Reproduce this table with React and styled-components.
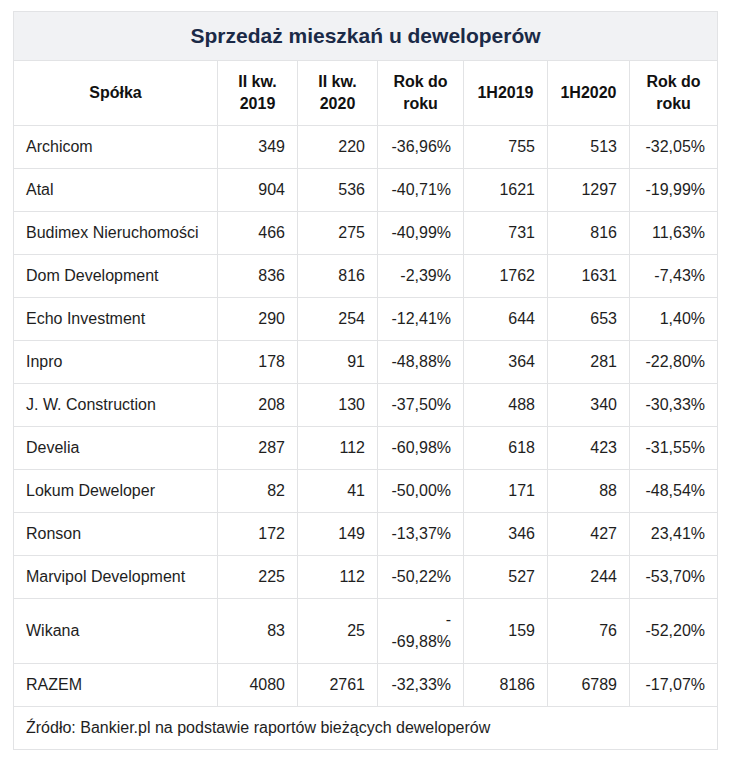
import React from 'react';
import styled, { createGlobalStyle } from 'styled-components';

const GlobalStyle = createGlobalStyle`
  body {
    margin: 0;
    background: #ffffff;
    font-family: "Liberation Sans", Arial, sans-serif;
  }
`;

const columns = [204, 80, 80, 86, 84, 82, 88];

const headers = [
  ['Spółka'],
  ['II kw.', '2019'],
  ['II kw.', '2020'],
  ['Rok do', 'roku'],
  ['1H2019'],
  ['1H2020'],
  ['Rok do', 'roku'],
];

const rows = [
  ['Archicom', '349', '220', '-36,96%', '755', '513', '-32,05%'],
  ['Atal', '904', '536', '-40,71%', '1621', '1297', '-19,99%'],
  ['Budimex Nieruchomości', '466', '275', '-40,99%', '731', '816', '11,63%'],
  ['Dom Development', '836', '816', '-2,39%', '1762', '1631', '-7,43%'],
  ['Echo Investment', '290', '254', '-12,41%', '644', '653', '1,40%'],
  ['Inpro', '178', '91', '-48,88%', '364', '281', '-22,80%'],
  ['J. W. Construction', '208', '130', '-37,50%', '488', '340', '-30,33%'],
  ['Develia', '287', '112', '-60,98%', '618', '423', '-31,55%'],
  ['Lokum Deweloper', '82', '41', '-50,00%', '171', '88', '-48,54%'],
  ['Ronson', '172', '149', '-13,37%', '346', '427', '23,41%'],
  ['Marvipol Development', '225', '112', '-50,22%', '527', '244', '-53,70%'],
  ['Wikana', '83', '25', ['-', '-69,88%'], '159', '76', '-52,20%'],
  ['RAZEM', '4080', '2761', '-32,33%', '8186', '6789', '-17,07%'],
];

const Page = styled.div`
  padding: 11px 13px;
`;

const Table = styled.table`
  width: 704px;
  table-layout: fixed;
  border-collapse: collapse;
  font-size: 16px;
  line-height: 22px;
  color: #1e1e1e;
`;

const TitleCell = styled.th`
  background: #f1f2f4;
  border: 1px solid #e2e3e5;
  padding: 12px;
  font-size: 21px;
  line-height: 24px;
  font-weight: 700;
  color: #1b2a47;
  text-align: center;
`;

const HeadCell = styled.th`
  border: 1px solid #e2e3e5;
  padding: 10px 12px;
  font-weight: 700;
  color: #111111;
  text-align: center;
  vertical-align: middle;
`;

const Cell = styled.td`
  border: 1px solid #e2e3e5;
  padding: 10px 12px;
  text-align: ${(p) => (p.$left ? 'left' : 'right')};
  vertical-align: middle;
  white-space: nowrap;
`;

const SourceCell = styled.td`
  border: 1px solid #e2e3e5;
  padding: 10px 12px;
  text-align: left;
`;

const lines = (v) =>
  Array.isArray(v)
    ? v.map((s, i) => (
        <React.Fragment key={i}>
          {i > 0 && <br />}
          {s}
        </React.Fragment>
      ))
    : v;

export default function App() {
  return (
    <Page>
      <GlobalStyle />
      <Table>
        <colgroup>
          {columns.map((w, i) => (
            <col key={i} style={{ width: w }} />
          ))}
        </colgroup>
        <thead>
          <tr>
            <TitleCell colSpan={7}>Sprzedaż mieszkań u deweloperów</TitleCell>
          </tr>
          <tr>
            {headers.map((h, i) => (
              <HeadCell key={i}>{lines(h)}</HeadCell>
            ))}
          </tr>
        </thead>
        <tbody>
          {rows.map((r) => (
            <tr key={r[0]}>
              {r.map((v, i) => (
                <Cell key={i} $left={i === 0}>
                  {lines(v)}
                </Cell>
              ))}
            </tr>
          ))}
          <tr>
            <SourceCell colSpan={7}>
              Źródło: Bankier.pl na podstawie raportów bieżących deweloperów
            </SourceCell>
          </tr>
        </tbody>
      </Table>
    </Page>
  );
}
